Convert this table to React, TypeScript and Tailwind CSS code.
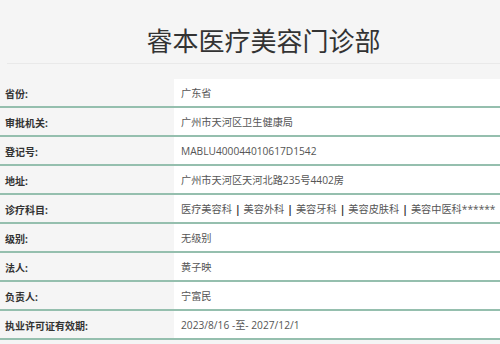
import React from 'react';

const rows: { label: string; value: React.ReactNode }[] = [
  { label: '省份:', value: '广东省' },
  { label: '审批机关:', value: '广州市天河区卫生健康局' },
  { label: '登记号:', value: 'MABLU400044010617D1542' },
  { label: '地址:', value: '广州市天河区天河北路235号4402房' },
  {
    label: '诊疗科目:',
    value: (
      <>
        医疗美容科 <b className="mx-[3px] text-[#333]">|</b> 美容外科{' '}
        <b className="mx-[3px] text-[#333]">|</b> 美容牙科{' '}
        <b className="mx-[3px] text-[#333]">|</b> 美容皮肤科{' '}
        <b className="mx-[3px] text-[#333]">|</b> 美容中医科******
      </>
    ),
  },
  { label: '级别:', value: '无级别' },
  { label: '法人:', value: '黄子映' },
  { label: '负责人:', value: '宁富民' },
  { label: '执业许可证有效期:', value: '2023/8/16 -至- 2027/12/1' },
];

export default function App() {
  return (
    <div
      className="w-[500px] h-[344px] overflow-hidden bg-[#f5f5f5]"
      style={{ fontFamily: '"Open Sans", "Noto Sans CJK SC", sans-serif' }}
    >
      <div className="h-[64px] flex items-center justify-center pl-[20px] border-b border-[#e9e9e9] ml-[7px]">
        <h1
          className="text-[26px] font-normal text-[#333] leading-none mt-[16px]"
          style={{ fontFamily: '"Noto Sans CJK SC", sans-serif' }}
        >
          睿本医疗美容门诊部
        </h1>
      </div>
      <div className="mt-[15px]">
        {rows.map((r) => (
          <div key={r.label} className="flex h-[29px] border-b-2 border-[#95bfae]">
            <div className="w-[174px] shrink-0 flex items-center pl-[5px] pt-[3px] text-[10px] font-bold text-[#333]">
              {r.label}
            </div>
            <div className="flex-1 bg-white flex items-center pl-[7px] pt-[3px] text-[10.2px] text-[#555] whitespace-nowrap overflow-hidden">
              {r.value}
            </div>
          </div>
        ))}
      </div>
    </div>
  );
}
